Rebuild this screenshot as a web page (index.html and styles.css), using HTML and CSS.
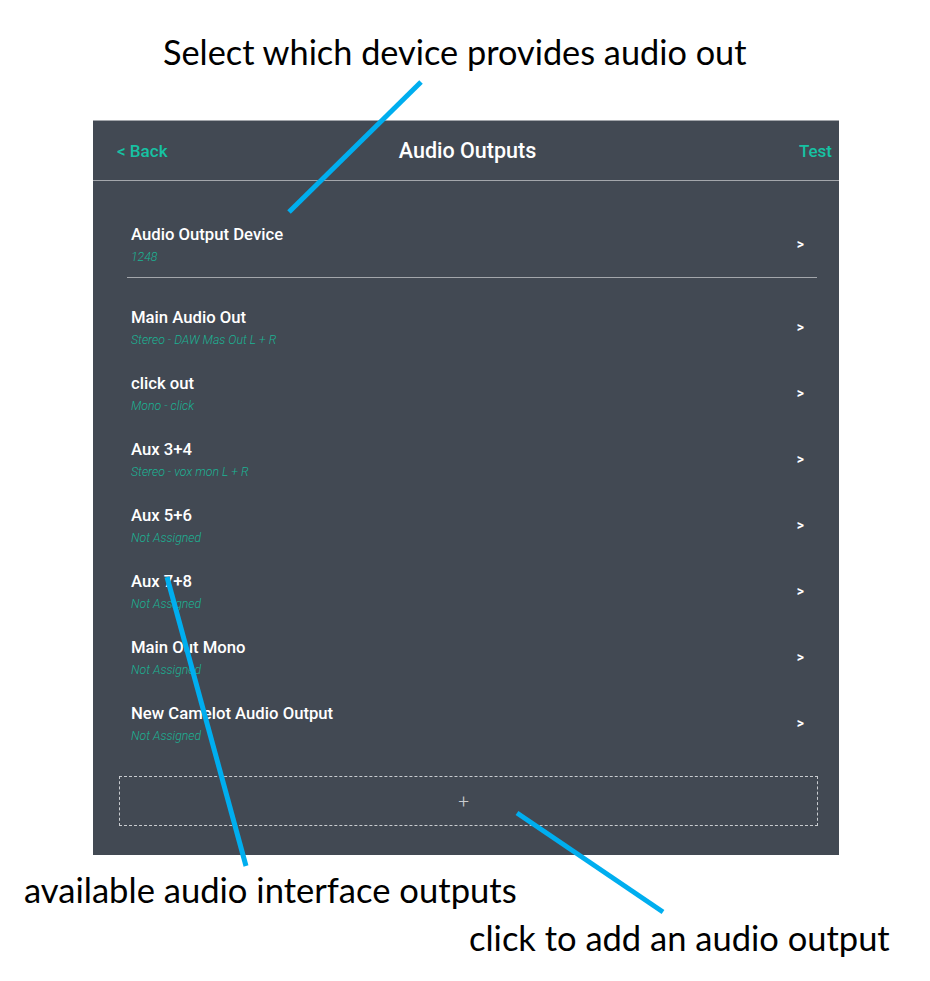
FILE: index.html
```html
<!DOCTYPE html>
<html>
<head>
<meta charset="utf-8">
<link rel="stylesheet" href="styles.css">
</head>
<body>
<div class="page">
  <div class="note note-top">Select which device provides audio out</div>
  <div class="panel">
    <div class="header">
      <span class="nav back">&lt; Back</span>
      <span class="title">Audio Outputs</span>
      <span class="nav test">Test</span>
    </div>
    <div class="device">
      <div class="row">
        <div class="row-text">
          <div class="row-title">Audio Output Device</div>
          <div class="row-sub">1248</div>
        </div>
        <span class="chev">&gt;</span>
      </div>
      <div class="sep"></div>
    </div>
    <div class="list">
      <div class="row"><div class="row-text"><div class="row-title">Main Audio Out</div><div class="row-sub">Stereo - DAW Mas Out L + R</div></div><span class="chev">&gt;</span></div>
      <div class="row"><div class="row-text"><div class="row-title">click out</div><div class="row-sub">Mono - click</div></div><span class="chev">&gt;</span></div>
      <div class="row"><div class="row-text"><div class="row-title">Aux 3+4</div><div class="row-sub">Stereo - vox mon L + R</div></div><span class="chev">&gt;</span></div>
      <div class="row"><div class="row-text"><div class="row-title">Aux 5+6</div><div class="row-sub">Not Assigned</div></div><span class="chev">&gt;</span></div>
      <div class="row"><div class="row-text"><div class="row-title">Aux 7+8</div><div class="row-sub">Not Assigned</div></div><span class="chev">&gt;</span></div>
      <div class="row"><div class="row-text"><div class="row-title">Main Out Mono</div><div class="row-sub">Not Assigned</div></div><span class="chev">&gt;</span></div>
      <div class="row"><div class="row-text"><div class="row-title">New Camelot Audio Output</div><div class="row-sub">Not Assigned</div></div><span class="chev">&gt;</span></div>
    </div>
    <div class="add">+</div>
  </div>
  <div class="note note-left">available audio interface outputs</div>
  <div class="note note-right">click to add an audio output</div>
  <svg class="pointers" width="930" height="981" viewBox="0 0 930 981">
    <line x1="421" y1="82" x2="289" y2="212"/>
    <line x1="167" y1="577" x2="246" y2="866"/>
    <line x1="517" y1="813" x2="663" y2="912"/>
  </svg>
</div>
</body>
</html>
```

FILE: styles.css
```css
html, body {
  margin: 0;
  padding: 0;
  background: #ffffff;
}

.page {
  position: relative;
  width: 930px;
  height: 981px;
  overflow: hidden;
}

.note {
  font-family: Lato, "Open Sans", "Liberation Sans", sans-serif;
  color: #000;
  white-space: nowrap;
}

.note-top {
  box-sizing: border-box;
  height: 120px;
  padding: 30px 0 0 163px;
  font-size: 34.3px;
  line-height: 44px;
}

.note-left {
  margin-top: 15px;
  padding-left: 24px;
  font-size: 34.6px;
  line-height: 40px;
}

.note-right {
  margin-top: 8px;
  padding-left: 469px;
  font-size: 34.5px;
  line-height: 40px;
}

.panel {
  box-sizing: border-box;
  margin-left: 93px;
  width: 746px;
  height: 735px;
  background: #424953;
  border-top: 1px solid #a3a6ab;
  font-family: Roboto, "Liberation Sans", sans-serif;
  display: flex;
  flex-direction: column;
}

.header {
  box-sizing: border-box;
  height: 60px;
  border-bottom: 1px solid #a3a6ab;
  display: grid;
  grid-template-columns: 1fr auto 1fr;
  align-items: center;
  padding: 0 7px;
}

.nav {
  color: #16c2a3;
  font-size: 17px;
  font-weight: 500;
}

.back {
  margin-left: 17px;
}

.test {
  justify-self: end;
}

.title {
  color: #ffffff;
  font-size: 21.5px;
  font-weight: 500;
  margin-left: 3px;
}

.device {
  padding-top: 30px;
}

.sep {
  height: 1px;
  background: #a3a6ab;
  margin: 0 22px 0 34px;
}

.list {
  padding-top: 16px;
}

.row {
  box-sizing: border-box;
  height: 66px;
  display: flex;
  align-items: center;
  justify-content: space-between;
  padding: 0 35px 0 38px;
}

.row-text {
  display: flex;
  flex-direction: column;
  gap: 6px;
}

.row-title {
  color: #ffffff;
  font-size: 16.7px;
  font-weight: 500;
  line-height: 19px;
}

.row-sub {
  color: #1bb393;
  font-size: 12.3px;
  font-weight: 300;
  font-style: italic;
  line-height: 14px;
}

.chev {
  color: #ffffff;
  font-size: 14px;
  font-weight: 700;
}

.add {
  box-sizing: border-box;
  margin: 20px 21px 0 26px;
  padding-right: 10px;
  height: 50px;
  border: 1px dashed #c9ccd0;
  display: flex;
  align-items: center;
  justify-content: center;
  color: #c9ccd0;
  font-size: 19px;
  font-weight: 300;
}

.pointers {
  position: absolute;
  top: 0;
  left: 0;
  pointer-events: none;
}

.pointers line {
  stroke: #00aeef;
  stroke-width: 5;
}
```
